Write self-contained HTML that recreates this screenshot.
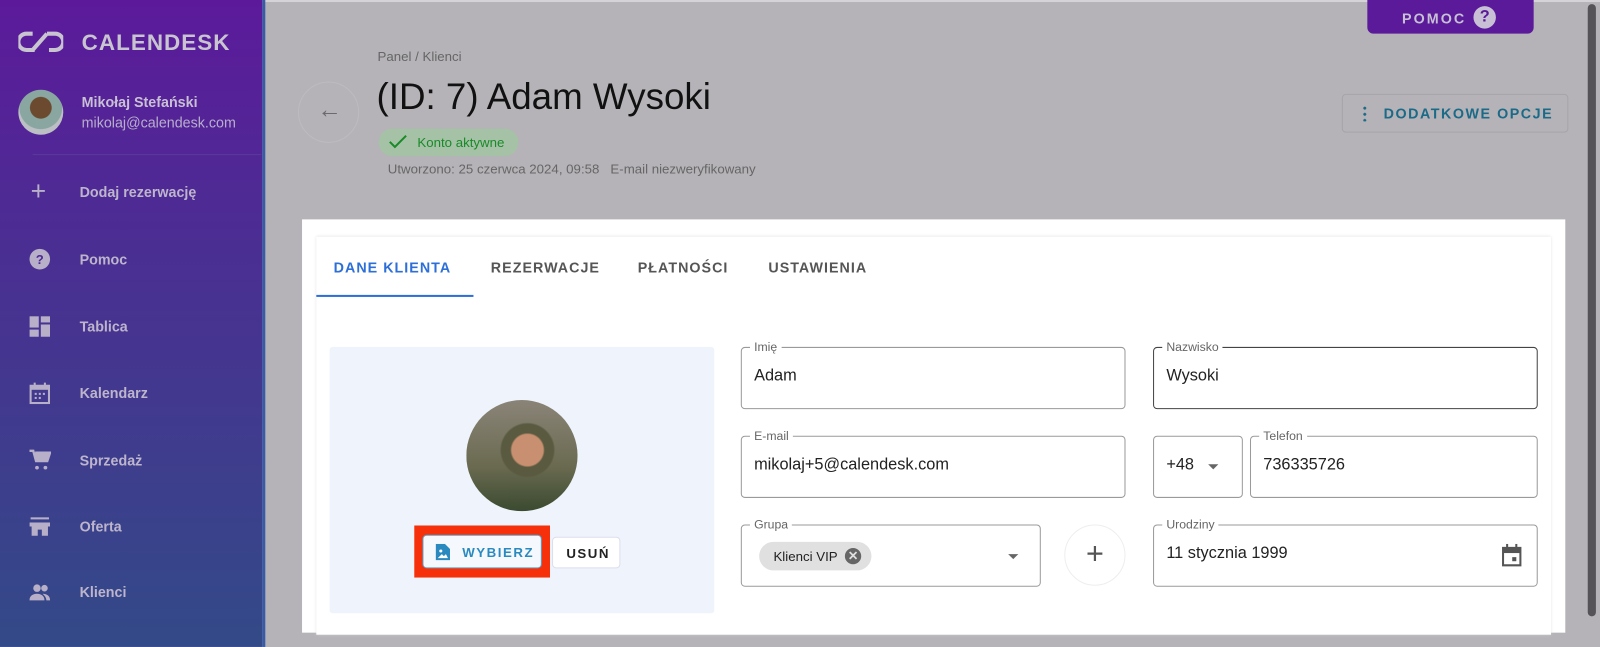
<!DOCTYPE html>
<html><head><meta charset="utf-8"><style>
*{box-sizing:border-box;margin:0;padding:0}
body{width:1600px;height:634px;overflow:hidden;background:#b5b3b7;font-family:"Liberation Sans",sans-serif;position:relative}
#w{position:absolute;left:0;top:0;width:1568px;height:622px;transform:scale(1.0204);transform-origin:0 0}
.a{position:absolute}
.side{left:0;top:0;width:260px;height:634px;background:linear-gradient(#5c1a9b,#4a2f92 40%,#334a88);border-right:3px solid #3a5aa6}
.nav{left:78px;color:#bdb5cc;font-size:14px;font-weight:bold}
.ic{left:28px;width:22px;height:22px;fill:#b8b0c8}
.f{position:absolute;border:1px solid #9a9a9a;border-radius:4px;background:#fff}
.f .l{position:absolute;top:-8px;left:8px;background:#fff;padding:0 4px;font-size:12px;color:#666}
.f .v{position:absolute;left:12px;top:19px;font-size:16px;color:#222}
</style></head><body><div id="w">
<div class="a" style="left:0;top:0;width:1600px;height:2px;background:#d5d3d7"></div>
<div class="a side"></div>
<svg class="a" style="left:18px;top:30px" width="44" height="22" viewBox="0 0 44 22"><path d="M14 3H8a8 8 0 0 0 0 16h8M30 19h6a8 8 0 0 0 0-16h-8M14 19L28 3" stroke="#c8c4d0" stroke-width="4" fill="none"/></svg>
<div class="a" style="left:80px;top:29px;font-size:22px;font-weight:bold;color:#c8c4d0;letter-spacing:1px">CALENDESK</div>
<div class="a" style="left:18px;top:88px;width:44px;height:44px;border-radius:50%;background:radial-gradient(circle at 50% 40%,#6b4a30 0 30%,#8aa6a0 32% 60%,#bcc0c4 62%)"></div>
<div class="a" style="left:80px;top:92px;font-size:14px;font-weight:bold;color:#c8c0d4">Mikołaj Stefański</div>
<div class="a" style="left:80px;top:112px;font-size:14px;color:#b8aecc">mikolaj@calendesk.com</div>
<div class="a" style="left:32px;top:151px;width:224px;height:1px;background:#5a3a9a"></div>
<div class="a" style="left:30px;top:176px;font-size:26px;color:#b8b0c8;line-height:22px">+</div>
<div class="a nav" style="top:180px">Dodaj rezerwację</div>
<svg class="a ic" style="top:243px" viewBox="0 0 24 24"><circle cx="12" cy="12" r="11"/><text x="12" y="17" font-size="14" font-weight="bold" text-anchor="middle" fill="#4e2a94" font-family="Liberation Sans">?</text></svg>
<div class="a nav" style="top:246px">Pomoc</div>
<svg class="a ic" style="top:309px" viewBox="0 0 22 22"><rect x="1" y="1" width="9" height="11"/><rect x="12" y="1" width="9" height="6"/><rect x="1" y="14" width="9" height="7"/><rect x="12" y="9" width="9" height="12"/></svg>
<div class="a nav" style="top:312px">Tablica</div>
<svg class="a ic" style="top:374px" viewBox="0 0 22 22"><path d="M2 4h18v17H2zM6 1v4M16 1v4" stroke="#b8b0c8" stroke-width="2" fill="none"/><rect x="2" y="4" width="18" height="4"/><rect x="6" y="11" width="2" height="2"/><rect x="10" y="11" width="2" height="2"/><rect x="14" y="11" width="2" height="2"/><rect x="6" y="15" width="2" height="2"/><rect x="10" y="15" width="2" height="2"/></svg>
<div class="a nav" style="top:377px">Kalendarz</div>
<svg class="a ic" style="top:440px" viewBox="0 0 24 24"><path d="M1 2h4l3 11h12l3-9H7" stroke="#b8b0c8" stroke-width="2.5" fill="#b8b0c8"/><circle cx="9" cy="20" r="2"/><circle cx="18" cy="20" r="2"/></svg>
<div class="a nav" style="top:443px">Sprzedaż</div>
<svg class="a ic" style="top:505px" viewBox="0 0 22 22"><rect x="2" y="2" width="18" height="2"/><path d="M1 7h20v4H1z"/><path d="M3 11h16v9H13v-6H9v6H3z"/></svg>
<div class="a nav" style="top:508px">Oferta</div>
<svg class="a ic" style="top:570px" viewBox="0 0 24 24"><circle cx="9" cy="7" r="4"/><circle cx="17" cy="7" r="3.5"/><path d="M1 20c0-5 4-7 8-7s8 2 8 7zM15 13c4 0 8 2 8 7h-4c0-3-2-5-4-7z"/></svg>
<div class="a nav" style="top:572px">Klienci</div>

<div class="a" style="left:1340px;top:0;width:163px;height:33px;background:#5a1a9a;border-radius:0 0 6px 6px"></div>
<div class="a" style="left:1374px;top:10px;color:#c8c0d4;font-weight:bold;font-size:14px;letter-spacing:2px;white-space:nowrap">POMOC</div>
<div class="a" style="left:1444px;top:6px;width:22px;height:22px;border-radius:50%;background:#c8c0d4;color:#5a1a9a;text-align:center;line-height:22px;font-size:16px;font-weight:bold">?</div>
<div class="a" style="left:1556px;top:4px;width:8px;height:600px;background:#555358;border-radius:4px"></div>

<div class="a" style="left:292px;top:80px;width:60px;height:60px;border-radius:50%;border:1px solid #bdbbbf"></div>
<div class="a" style="left:311px;top:94px;font-size:24px;color:#6c6a70">←</div>
<div class="a" style="left:370px;top:48px;font-size:13px;color:#666">Panel / Klienci</div>
<div class="a" style="left:369px;top:74px;font-size:36px;color:#111">(ID: 7) Adam Wysoki</div>
<div class="a" style="left:371px;top:126px;width:137px;height:27px;border-radius:14px;background:#a5c2a7;color:#1a8a28;font-size:13px;padding:6px 0 0 38px">Konto aktywne</div>
<svg class="a" style="left:380px;top:131px" width="20" height="16" viewBox="0 0 20 16"><path d="M2 8l5 5L18 2" stroke="#1a8a28" stroke-width="2" fill="none"/></svg>
<div class="a" style="left:380px;top:158px;font-size:13px;color:#666">Utworzono: 25 czerwca 2024, 09:58 &nbsp; E-mail niezweryfikowany</div>
<div class="a" style="left:1315px;top:92px;width:222px;height:38px;border:1px solid #a6a4a8;border-radius:4px"></div>
<div class="a" style="left:1356px;top:103px;color:#1a6a88;font-size:14px;font-weight:bold;letter-spacing:1.5px;white-space:nowrap">DODATKOWE OPCJE</div>
<div class="a" style="left:1336px;top:103px;width:3px;height:16px;background:radial-gradient(circle,#1a6a88 1.3px,transparent 1.6px) 0 0/3px 6px"></div>

<div class="a" style="left:296px;top:215px;width:1238px;height:405px;background:#fff"></div>
<div class="a" style="left:310px;top:232px;width:1210px;height:390px;background:#fff;box-shadow:0 0 3px #ddd"></div>
<div class="a" style="left:327px;top:254px;font-size:14px;font-weight:bold;letter-spacing:1px;color:#2d6fd8">DANE KLIENTA</div>
<div class="a" style="left:481px;top:254px;font-size:14px;font-weight:bold;letter-spacing:1px;color:#555">REZERWACJE</div>
<div class="a" style="left:625px;top:254px;font-size:14px;font-weight:bold;letter-spacing:1px;color:#555">PŁATNOŚCI</div>
<div class="a" style="left:753px;top:254px;font-size:14px;font-weight:bold;letter-spacing:1px;color:#555">USTAWIENIA</div>
<div class="a" style="left:310px;top:289px;width:154px;height:2px;background:#2d6fd8"></div>

<div class="a" style="left:323px;top:340px;width:377px;height:261px;background:#eff3fb;border-radius:3px"></div>
<div class="a" style="left:457px;top:392px;width:109px;height:109px;border-radius:50%;background:radial-gradient(ellipse at 55% 45%,#c89070 0 18%,#5a5a40 20% 30%,transparent 32%),linear-gradient(#8a8478,#6a6a50 60%,#3a4a30)"></div>
<div class="a" style="left:406px;top:515px;width:133px;height:51px;background:#f5300a"></div>
<div class="a" style="left:414px;top:524px;width:117px;height:33px;background:#f5f8fc;border:1px solid #5aa0c8;border-radius:4px;color:#2a8ac0;font-size:13px;font-weight:bold;letter-spacing:1.5px;padding:9px 0 0 38px;white-space:nowrap">WYBIERZ</div>
<svg class="a" style="left:427px;top:533px" width="14" height="16" viewBox="0 0 14 16"><path d="M0 0h9l5 5v11H0z" fill="#2a8ac0"/><circle cx="5" cy="7" r="1.5" fill="#fff"/><path d="M2 14l4-4 2 2 2-2 2 4z" fill="#fff"/></svg>
<div class="a" style="left:541px;top:526px;width:67px;height:31px;background:#fff;border:1px solid #dde;border-radius:4px;font-size:13px;font-weight:bold;letter-spacing:1.5px;padding:8px 0 0 13px;color:#222">USUŃ</div>

<div class="f" style="left:726px;top:340px;width:377px;height:61px"><span class="l">Imię</span><span class="v">Adam</span></div>
<div class="f" style="left:1130px;top:340px;width:377px;height:61px;border-color:#444"><span class="l">Nazwisko</span><span class="v">Wysoki</span></div>
<div class="f" style="left:726px;top:427px;width:377px;height:61px"><span class="l">E-mail</span><span class="v">mikolaj+5@calendesk.com</span></div>
<div class="f" style="left:1130px;top:427px;width:88px;height:61px"><span class="v">+48</span><span class="a" style="left:53px;top:27px;border:5px solid transparent;border-top-color:#666"></span></div>
<div class="f" style="left:1225px;top:427px;width:282px;height:61px"><span class="l">Telefon</span><span class="v">736335726</span></div>
<div class="f" style="left:726px;top:514px;width:294px;height:61px"><span class="l">Grupa</span><span class="a" style="left:17px;top:16px;width:110px;height:28px;border-radius:14px;background:#e0e0e0;font-size:13px;padding:7px 0 0 14px;color:#222">Klienci VIP</span><span class="a" style="left:101px;top:22px;width:16px;height:16px;border-radius:50%;background:#666;color:#e0e0e0;font-size:12px;font-weight:bold;text-align:center;line-height:16px">✕</span><span class="a" style="left:261px;top:28px;border:5px solid transparent;border-top-color:#666"></span></div>
<div class="a" style="left:1043px;top:514px;width:60px;height:60px;border-radius:50%;border:1px solid #eee;font-size:30px;color:#555;text-align:center;line-height:56px">+</div>
<div class="f" style="left:1130px;top:514px;width:377px;height:61px"><span class="l">Urodziny</span><span class="v">11 stycznia 1999</span>
<svg class="a" style="left:340px;top:18px" width="21" height="23" viewBox="0 0 21 23"><path d="M2 4h17v17H2z" stroke="#555" stroke-width="2" fill="none"/><rect x="2" y="4" width="17" height="5" fill="#555"/><rect x="5" y="0" width="2" height="5" fill="#555"/><rect x="14" y="0" width="2" height="5" fill="#555"/><rect x="11" y="13" width="4" height="4" fill="#555"/></svg></div>
</div></body></html>
